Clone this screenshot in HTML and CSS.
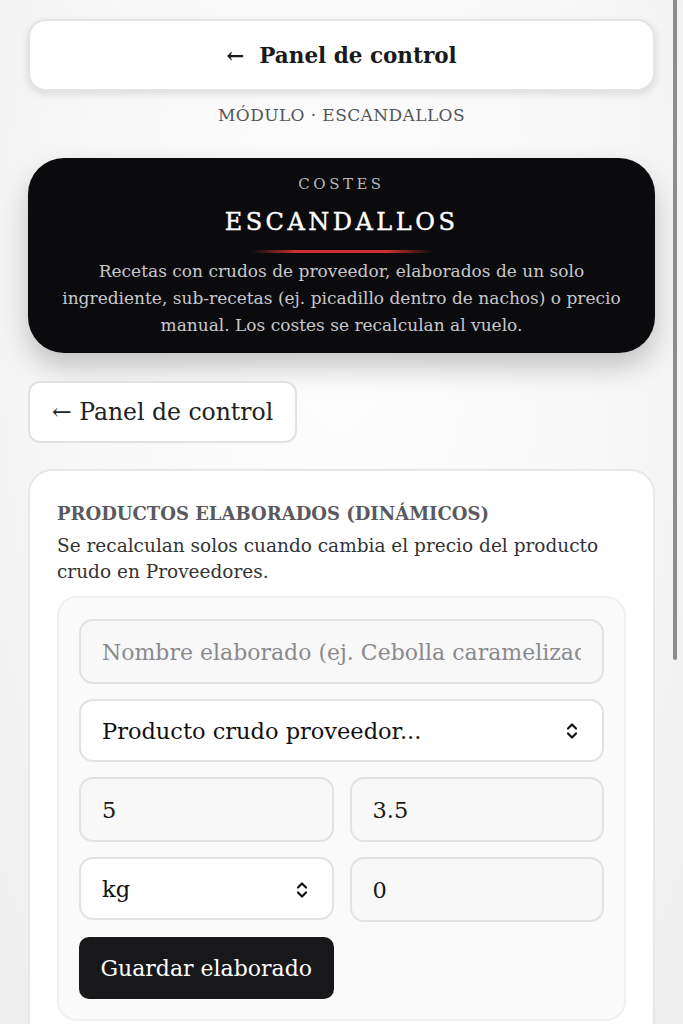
FILE: index.html
```html
<!DOCTYPE html>
<html lang="es">
<head>
    <meta charset="UTF-8">
    <meta name="viewport" content="width=device-width, initial-scale=1.0">
    <title>Escandallos | Panel de control</title>
    <link rel="stylesheet" href="styles.css">
</head>
<body>
    <main class="page">
        <a href="#" class="top-back">&larr;&nbsp; Panel de control</a>
        <div class="module-label">MÓDULO · ESCANDALLOS</div>

        <!-- Cabecera del módulo -->
        <header class="hero">
            <div class="hero-kicker">COSTES</div>
            <h1>ESCANDALLOS</h1>
            <div class="hero-line"></div>
            <p>Recetas con crudos de proveedor, elaborados de un solo ingrediente, sub-recetas (ej. picadillo dentro de nachos) o precio manual. Los costes se recalculan al vuelo.</p>
        </header>

        <div class="back-row">
            <a href="#" class="back-button">&larr; Panel de control</a>
        </div>

        <section class="card">
            <h2>PRODUCTOS ELABORADOS (DINÁMICOS)</h2>
            <p class="card-text">Se recalculan solos cuando cambia el precio del producto crudo en Proveedores.</p>

            <form class="form-box">
                <input class="field" type="text" placeholder="Nombre elaborado (ej. Cebolla caramelizada)">

                <div class="select-wrap">
                    <select class="field select">
                        <option>Producto crudo proveedor...</option>
                    </select>
                    <svg class="chevrons" viewBox="0 0 12 18" aria-hidden="true">
                        <path d="M2 6.5l4-4 4 4M10 11.5l-4 4-4-4" />
                    </svg>
                </div>

                <div class="field-row">
                    <input class="field" type="text" value="5">
                    <input class="field" type="text" value="3.5">
                </div>

                <div class="field-row">
                    <div class="select-wrap">
                        <select class="field select">
                            <option>kg</option>
                            <option>g</option>
                            <option>l</option>
                            <option>ud</option>
                        </select>
                        <svg class="chevrons" viewBox="0 0 12 18" aria-hidden="true">
                            <path d="M2 6.5l4-4 4 4M10 11.5l-4 4-4-4" />
                        </svg>
                    </div>
                    <input class="field" type="text" value="0">
                </div>

                <div class="field-row">
                    <button type="button" class="save-button">Guardar elaborado</button>
                </div>
            </form>
        </section>
    </main>

    <div class="scroll-thumb"></div>
</body>
</html>
```

FILE: styles.css
```css
:root {
    --bg-color: #f6f6f6;
    --text-color: #1c1c1e;
    --muted-color: #5a5a5e;
    --border-color: #e2e2e2;
    --field-bg: #f8f8f8;
    --dark-bg: #0b0b0d;
    --accent-red: #d0302f;
}

* {
    box-sizing: border-box;
}

body {
    margin: 0;
    font-family: "DejaVu Serif", serif;
    background: radial-gradient(ellipse at 50% 30%, #fdfdfd 0%, #f7f7f7 60%, #ededed 100%);
    color: var(--text-color);
    min-height: 1024px;
}

.page {
    padding: 19px 28px 0;
}

a {
    color: inherit;
    text-decoration: none;
}

.top-back {
    display: flex;
    align-items: center;
    justify-content: center;
    height: 72px;
    background: #fff;
    border: 2px solid #e4e4e4;
    border-radius: 18px;
    box-shadow: 0 3px 8px rgba(0, 0, 0, 0.12);
    font-size: 21.5px;
    font-weight: bold;
    color: #1a1a1a;
}

.module-label {
    text-align: center;
    margin-top: 14px;
    font-size: 17px;
    letter-spacing: 0.4px;
    color: #55555a;
}

.hero {
    margin-top: 33px;
    background: var(--dark-bg);
    border-radius: 36px;
    padding: 16px 20px 14px;
    text-align: center;
    box-shadow: 0 14px 28px rgba(0, 0, 0, 0.22);
}

.hero-kicker {
    font-size: 15px;
    letter-spacing: 3.5px;
    color: #b8b8bc;
    line-height: 20px;
}

.hero h1 {
    margin: 13px 0 0;
    font-size: 24px;
    font-weight: normal;
    letter-spacing: 3.5px;
    color: #fff;
    line-height: 30px;
    -webkit-text-stroke: 0.4px #fff;
}

.hero-line {
    width: 182px;
    height: 3px;
    margin: 13px auto 5px;
    background: linear-gradient(90deg, rgba(208, 48, 47, 0), var(--accent-red) 25%, var(--accent-red) 75%, rgba(208, 48, 47, 0));
}

.hero p {
    margin: 0;
    font-size: 17px;
    line-height: 27px;
    color: #c8c8cc;
}

.back-row {
    margin-top: 28px;
    display: flex;
}

.back-button {
    display: flex;
    align-items: center;
    height: 62px;
    padding: 0 22px 0 22px;
    background: #fff;
    border: 2px solid #e2e2e2;
    border-radius: 12px;
    font-size: 23.5px;
    color: #222;
}

.card {
    margin-top: 26px;
    background: #fff;
    border: 2px solid #e8e8e8;
    border-bottom: 0;
    border-radius: 24px 24px 0 0;
    padding: 30px 27px 20px;
}

.card h2 {
    margin: 0;
    font-size: 18px;
    font-weight: bold;
    color: #5a5a5e;
    line-height: 26px;
}

.card-text {
    margin: 6px 0 0;
    font-size: 18.5px;
    line-height: 26px;
    color: #333;
}

.form-box {
    margin-top: 11px;
    background: #fafafa;
    border: 2px solid #f0f0f0;
    border-radius: 20px;
    padding: 21px 20px 20px;
    display: flex;
    flex-direction: column;
    gap: 15px;
}

.field {
    width: 100%;
    height: 65px;
    padding: 0 21px;
    background: var(--field-bg);
    border: 2px solid var(--border-color);
    border-radius: 14px;
    font-family: inherit;
    font-size: 22.5px;
    color: #1a1a1a;
    outline: none;
}

.field::placeholder {
    color: #8a8a8e;
    font-size: 22px;
}

.select {
    appearance: none;
    -webkit-appearance: none;
    background: #fff;
    height: 63px;
    color: #111;
}

.select-wrap {
    position: relative;
    width: 100%;
}

.chevrons {
    position: absolute;
    right: 26px;
    top: 50%;
    width: 12px;
    height: 18px;
    margin-top: -9px;
    fill: none;
    stroke: #111;
    stroke-width: 2.2;
    stroke-linecap: round;
    stroke-linejoin: round;
    pointer-events: none;
}

.field-row {
    display: grid;
    grid-template-columns: 1fr 1fr;
    gap: 16px;
}

.save-button {
    height: 62px;
    background: #18181b;
    color: #fff;
    border: 0;
    border-radius: 10px;
    font-family: inherit;
    font-size: 22px;
    cursor: pointer;
}

.scroll-thumb {
    position: fixed;
    top: 0;
    right: 6px;
    width: 4px;
    height: 660px;
    background: #8c8c8c;
    border-radius: 0 0 2px 2px;
}
```
